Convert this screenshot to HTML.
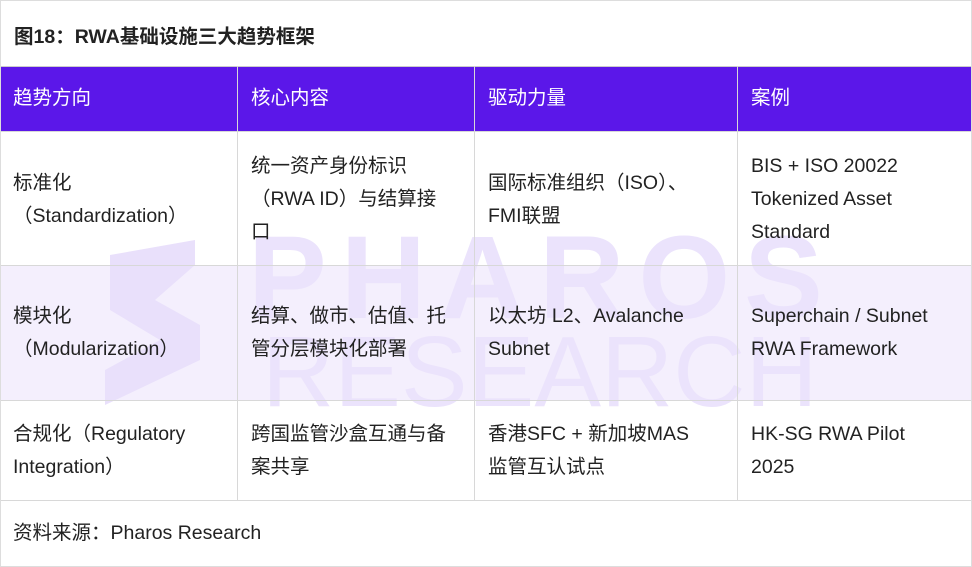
<!DOCTYPE html>
<html><head><meta charset="utf-8"><style>
*{margin:0;padding:0;box-sizing:border-box}
body{width:972px;height:567px;background:#fff;position:relative;overflow:hidden;font-family:"Liberation Sans","Noto Sans CJK SC",sans-serif;color:#222}
.frame{position:absolute;left:0;top:0;width:972px;height:567px;border:1px solid #ddd}
.title{position:absolute;left:14px;top:20px;font-size:19.5px;font-weight:bold;color:#222}
.hdr{position:absolute;left:0;top:66px;width:972px;height:65px;background:#5b17e9}
.r2{position:absolute;left:0;top:265px;width:972px;height:135px;background:#f4effd}
.h{position:absolute;height:1px;background:#d8d8d8;left:0;width:972px}
.v{position:absolute;width:1px;background:#d8d8d8;top:66px;height:434px}
.c{position:absolute;font-size:19.5px;line-height:33px;white-space:nowrap}
.w{color:#fff}
.wm{position:absolute;color:#ebe3fc;white-space:nowrap}
</style></head><body>
<div class="r2"></div>
<div class="hdr"></div>
<svg style="position:absolute;left:100px;top:240px" width="110" height="170" viewBox="0 0 110 170"><polygon points="10,15 95,0 95,25 55,60 100,85 100,120 5,165 5,130 60,100 10,70" fill="#e9e0fb"/></svg>
<div class="wm" style="left:248px;top:218px;font-size:118px;font-weight:bold;letter-spacing:14px;line-height:120px">PHAROS</div>
<div class="wm" style="left:262px;top:322px;font-size:100px;letter-spacing:0;line-height:100px">RESEARCH</div>
<div class="h" style="top:66px;background:#ccc"></div>
<div class="h" style="top:131px"></div>
<div class="h" style="top:265px"></div>
<div class="h" style="top:400px"></div>
<div class="h" style="top:500px"></div>
<div class="v" style="left:237px"></div>
<div class="v" style="left:474px"></div>
<div class="v" style="left:737px"></div>
<div class="title">图18：RWA基础设施三大趋势框架</div>
<div class="c w" style="left:13px;top:82px">趋势方向</div>
<div class="c w" style="left:251px;top:82px">核心内容</div>
<div class="c w" style="left:488px;top:82px">驱动力量</div>
<div class="c w" style="left:751px;top:82px">案例</div>
<div class="c" style="left:13px;top:167px">标准化<br>（Standardization）</div>
<div class="c" style="left:251px;top:150px">统一资产身份标识<br>（RWA ID）与结算接<br>口</div>
<div class="c" style="left:488px;top:167px">国际标准组织（ISO）、<br>FMI联盟</div>
<div class="c" style="left:751px;top:150px">BIS + ISO 20022<br>Tokenized Asset<br>Standard</div>
<div class="c" style="left:13px;top:300px">模块化<br>（Modularization）</div>
<div class="c" style="left:251px;top:300px">结算、做市、估值、托<br>管分层模块化部署</div>
<div class="c" style="left:488px;top:300px">以太坊 L2、Avalanche<br>Subnet</div>
<div class="c" style="left:751px;top:300px">Superchain / Subnet<br>RWA Framework</div>
<div class="c" style="left:13px;top:418px">合规化（Regulatory<br>Integration）</div>
<div class="c" style="left:251px;top:418px">跨国监管沙盒互通与备<br>案共享</div>
<div class="c" style="left:488px;top:418px">香港SFC + 新加坡MAS<br>监管互认试点</div>
<div class="c" style="left:751px;top:418px">HK-SG RWA Pilot<br>2025</div>
<div class="c" style="left:13px;top:517px">资料来源：Pharos Research</div>
<div class="frame"></div>
</body></html>
